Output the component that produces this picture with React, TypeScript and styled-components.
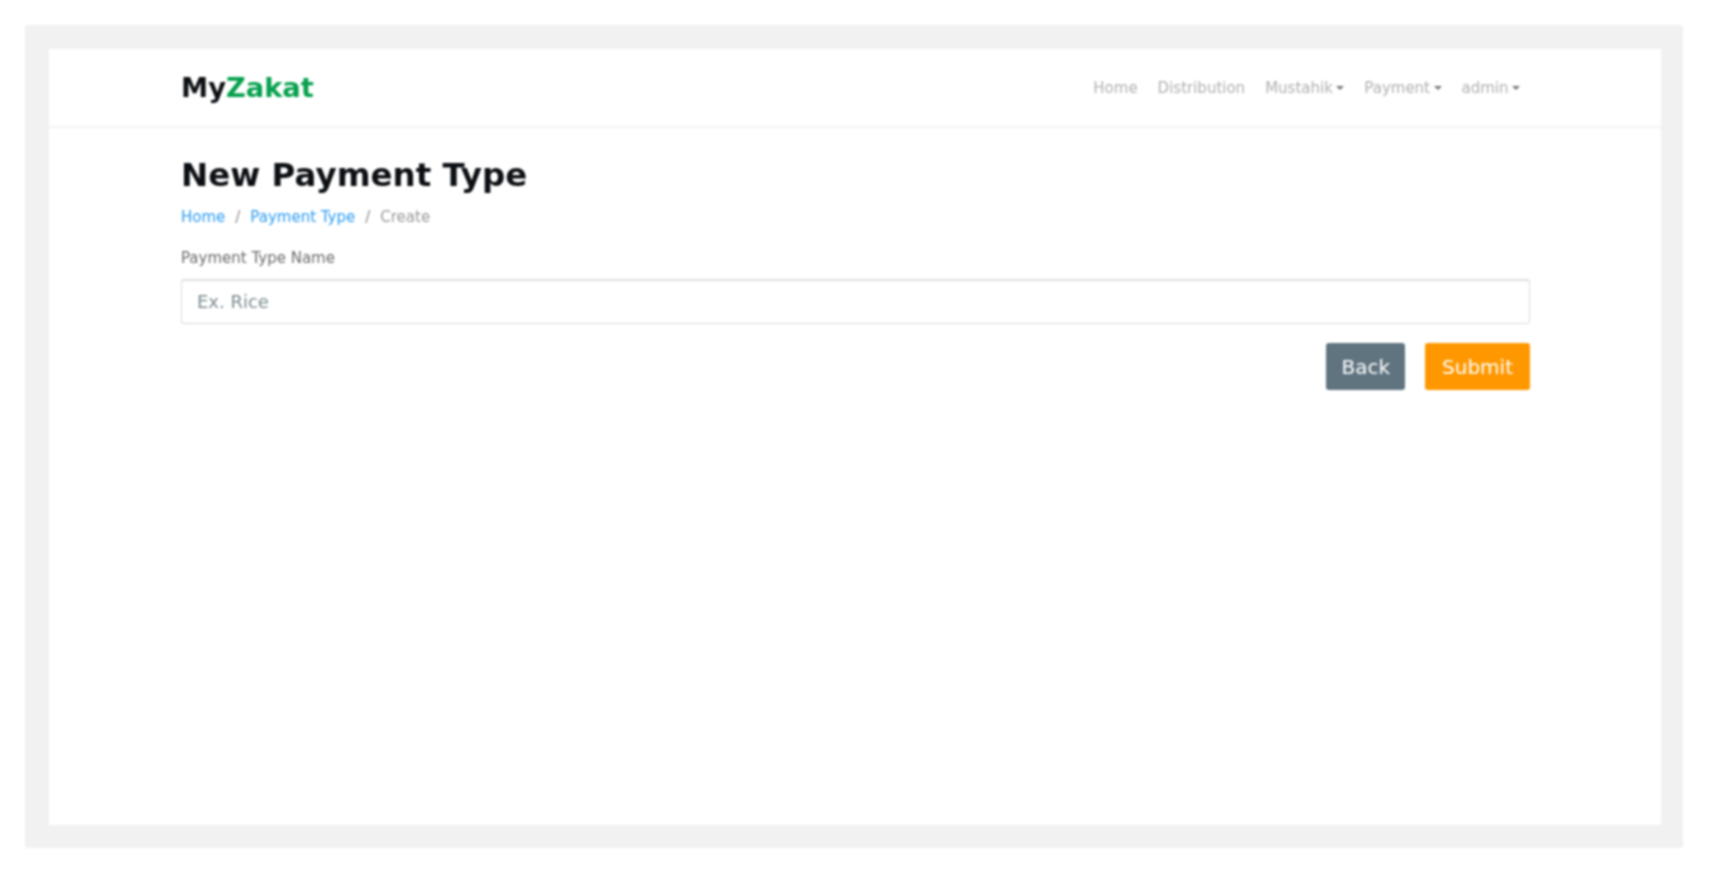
import React from "react";
import styled, { createGlobalStyle } from "styled-components";

const GlobalStyle = createGlobalStyle`
  html, body {
    margin: 0;
    padding: 0;
    background: #fff;
  }
  body {
    font-family: "DejaVu Sans", "Liberation Sans", sans-serif;
  }
`;

const Caret = styled.span`
  display: inline-block;
  width: 0;
  height: 0;
  margin-left: 3.5px;
  vertical-align: 3px;
  border-top: 4px solid #777;
  border-left: 4px solid transparent;
  border-right: 4px solid transparent;
`;

const App = () => {
  return (
    <>
      <GlobalStyle />
      <Page>
        <Frame>
          <Sheet>
            <Navbar>
              <NavInner>
                <Brand>
                  My<BrandAccent>Zakat</BrandAccent>
                </Brand>
                <NavLinks>
                  <NavLink>Home</NavLink>
                  <NavLink>Distribution</NavLink>
                  <NavLink>
                    Mustahik
                    <Caret />
                  </NavLink>
                  <NavLink>
                    Payment
                    <Caret />
                  </NavLink>
                  <NavLink>
                    admin
                    <Caret />
                  </NavLink>
                </NavLinks>
              </NavInner>
            </Navbar>
            <Content>
              <Title>New Payment Type</Title>
              <Breadcrumb>
                <Crumb>Home</Crumb>
                <Slash>/</Slash>
                <Crumb>Payment Type</Crumb>
                <Slash>/</Slash>
                <Current>Create</Current>
              </Breadcrumb>
              <Form>
                <Label htmlFor="payment-type">Payment Type Name</Label>
                <Input id="payment-type" placeholder="Ex. Rice" />
                <Actions>
                  <Button type="button" $bg="#607480" $pad={15}>
                    Back
                  </Button>
                  <Button type="submit" $bg="#ff9800" $pad={17}>
                    Submit
                  </Button>
                </Actions>
              </Form>
            </Content>
          </Sheet>
        </Frame>
      </Page>
    </>
  );
};

export default App;

const Page = styled.div`
  height: 873px;
  padding: 25px 26px 25px 25px;
  box-sizing: border-box;
  overflow: hidden;
  filter: blur(0.85px);
`;

const Frame = styled.div`
  height: 100%;
  box-sizing: border-box;
  padding: 24px 22px 23px 24px;
  background: #f1f1f1;
  border-radius: 3px;
`;

const Sheet = styled.div`
  height: 100%;
  background: #fff;
`;

const Navbar = styled.nav`
  height: 79px;
  box-sizing: border-box;
  border-bottom: 2px solid #f3f3f3;
`;

const NavInner = styled.div`
  height: 100%;
  display: flex;
  align-items: center;
  justify-content: space-between;
  padding: 0 141px 0 132px;
`;

const Brand = styled.div`
  font-size: 27.3px;
  font-weight: 700;
  color: #0c1014;
`;

const BrandAccent = styled.span`
  color: #04a04c;
`;

const NavLinks = styled.div`
  display: flex;
  align-items: center;
  gap: 20px;
`;

const NavLink = styled.a`
  font-size: 15px;
  color: #b0b0b0;
  white-space: nowrap;
`;

const Content = styled.main`
  padding: 23px 131px 0 132px;
`;

const Title = styled.h1`
  margin: 0;
  font-size: 32.5px;
  line-height: 48px;
  font-weight: 700;
  color: #0c1014;
`;

const Breadcrumb = styled.div`
  display: flex;
  align-items: center;
  gap: 10px;
  height: 24px;
  margin-top: 6px;
  font-size: 15px;
`;

const Crumb = styled.a`
  color: #2c9cf2;
`;

const Slash = styled.span`
  color: #8a8a8a;
`;

const Current = styled.span`
  color: #999;
`;

const Form = styled.form`
  display: flex;
  flex-direction: column;
  margin-top: 19px;
`;

const Label = styled.label`
  font-size: 15px;
  line-height: 20px;
  color: #6b6b6b;
`;

const Input = styled.input`
  height: 45px;
  box-sizing: border-box;
  margin-top: 11px;
  padding: 0 15px 2px;
  font-family: inherit;
  font-size: 18px;
  background: #fff;
  border: 1px solid #dcdcdc;
  border-top-width: 2px;
  border-radius: 3px;

  &::placeholder {
    color: #7d8b90;
    opacity: 1;
  }
`;

const Actions = styled.div`
  display: flex;
  justify-content: flex-end;
  gap: 20px;
  margin-top: 19px;
`;

const Button = styled.button<{ $bg: string; $pad: number }>`
  height: 47px;
  padding: 0 ${(p) => p.$pad}px;
  font-family: inherit;
  font-size: 20px;
  color: #fff;
  background: ${(p) => p.$bg};
  border: none;
  border-radius: 3px;
`;
